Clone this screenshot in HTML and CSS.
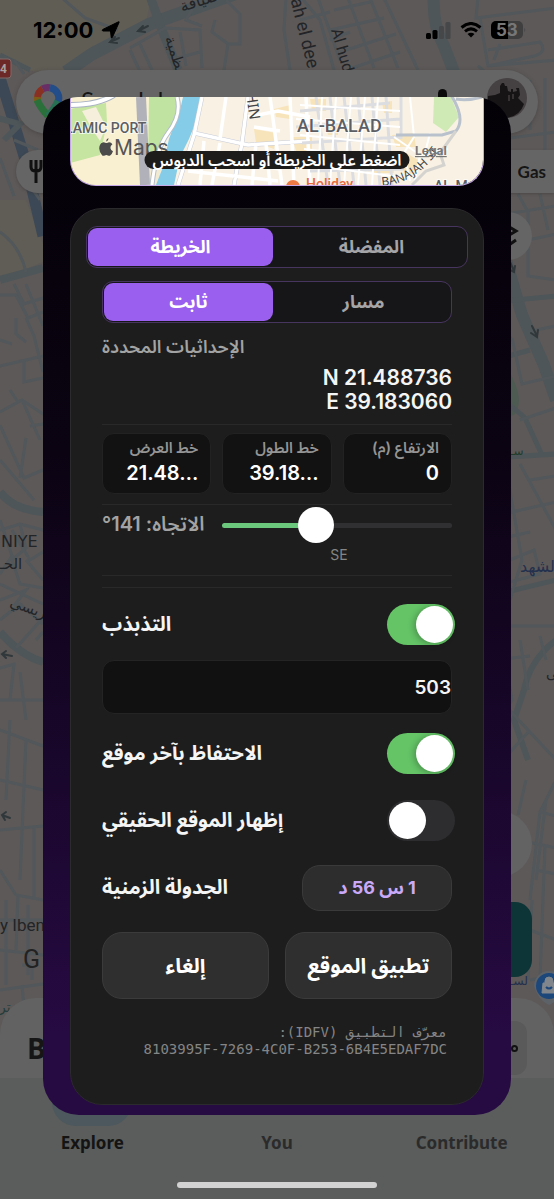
FILE: index.html
```html
<!DOCTYPE html>
<html lang="ar">
<head>
<meta charset="utf-8">
<meta name="viewport" content="width=device-width, initial-scale=1">
<title>الخريطة</title>
<link rel="stylesheet" href="styles.css">
</head>
<body>
<div class="screen">
  <div class="backdrop">
    <svg class="base-map" viewBox="0 0 554 1199" preserveAspectRatio="xMidYMin slice" aria-hidden="true">
      <rect width="554" height="1199" fill="#5d5958"/>
      <path d="M0 0H150L146 24L92 58L60 74L22 70L0 56Z" fill="#605d55"/>
      <path d="M0 200H26L43 244V262L0 280Z" fill="#5f5d55"/>
      <path d="M494 350Q530 395 514 415L494 420Z" fill="#4d5b52"/>
      <g fill="none" stroke="#4e5659" stroke-linejoin="round">
        <path d="M66 72L92 54L150 24L240 -8" stroke-width="13"/>
        <path d="M150 -4L162 30L178 70" stroke-width="9"/>
        <path d="M434 -4Q432 24 444 46L454 72" stroke-width="12"/>
        <path d="M500 240L522 315L544 365L556 400" stroke-width="12"/>
        <path d="M494 302L556 296M494 360L530 350M494 395Q515 408 525 418L542 455M494 458L556 454M494 595L556 580" stroke-width="5"/>
        <path d="M0 280L43 268M0 492Q14 510 43 512M0 632Q20 655 43 662" stroke-width="8"/>
        <path d="M556 640Q530 660 524 690L514 720L528 760" stroke-width="6"/>
        <path d="M0 55L30 70" stroke-width="5"/>
      </g>
      <g fill="none" stroke="#3c4855">
        <path d="M0 78L10 110L24 156L43 236" stroke-width="11"/>
        <path d="M-2 118L20 124L4 140" stroke="#4e5659" stroke-width="6"/>
      </g>
      <g fill="none" stroke="#51575a" stroke-width="3">
        <path d="M62 -2L85 18L118 30M130 50L142 76M130 48L165 28L200 30L202 68M140 44L152 70M180 32L186 66M200 -4L186 20L202 26M215 20L212 32L228 44H240V14L226 0M228 44L224 70M170 60L200 52"/>
        <path d="M286 -2L284 30L290 70M300 -4L320 20L334 70M318 -2L340 60M334 10L370 2M330 30L384 18M340 52L396 34M348 -2L374 68M370 -2L398 68M384 -2L418 70M300 20L330 12M352 68L400 52M330 40L350 32"/>
        <path d="M478 -2L476 18L556 8M480 18L488 66L556 60M488 50L540 42Q548 52 534 56L488 66M500 44L494 60M530 80V130M545 78V150M494 140L556 132M478 66L492 78"/>
        <path d="M14 60L24 74M0 158L14 196M26 180L40 200M14 140L38 150"/>
        <path d="M0 232Q20 246 26 272M0 295H16L28 318L43 312M14 284L24 304L43 298M26 284L43 326M16 318V334L26 342M0 340L12 344M26 318L34 336L43 372M0 366L43 356M0 412L22 400L43 414M24 360V382L43 378M10 390L18 402M0 425L24 478L43 470M22 400L40 440M30 426L43 424M26 438L20 478M0 460L12 474L34 500"/>
        <path d="M0 530L20 524L43 530M0 520L12 556L0 574M12 530L30 560L43 552M20 524L26 548L12 560L20 584L43 588M0 584L43 604M0 600L26 590L14 606M26 560L43 580M0 620L20 604L43 624M16 648L43 618M0 668L14 664L10 700M20 672L26 720M36 640L43 632M0 700H43"/>
        <path d="M494 216L556 206M518 194L528 212V276L556 280M540 194L548 230M528 240L556 234M494 340L512 338M536 330L556 326M512 338L522 384L556 376M520 420L556 408M506 468L522 560L510 600M520 464L556 530M494 516L556 502M494 540L530 532M510 560L534 550L540 574L510 582M530 480L556 476M494 626H556M502 640L512 700L494 730M520 640L528 690M540 636L546 660M494 660L530 656M500 700L556 760M530 730L494 770"/>
        <path d="M526 780L518 815M556 780L540 812L530 900M540 812L556 816M528 842L556 848M536 870L556 874M530 930L556 940M532 900L528 980M546 800L536 880M545 846L540 980M530 980L556 975"/>
        <path d="M0 730L43 746M10 720L6 800M0 780L43 790M26 740L20 880M0 830L43 826M0 870L16 895L43 900M18 895L16 950M0 920H43M6 900V985M28 905V975M0 950L43 955M0 990L43 984M22 965H32V980M22 985L24 1006M34 826V900"/>
      </g>
      <g fill="none" stroke="#31383b" stroke-width="2" stroke-linecap="round">
        <path d="M148 26L138 31M143 26L138 31L145 32M119 38L110 42M115 37L110 42L117 43"/>
        <path d="M532 326L537 336M531 333L537 337L538 330M510 262L514 271M508 269L514 272L515 266M12 656L2 654M6 651L2 654L6 658"/>
        <path d="M10 818L2 815M6 812L2 815L5 820"/>
      </g>
      <g class="map-names">
        <text x="182" y="12" transform="rotate(-18 182 12)" font-size="16">ضيافة</text>
        <text x="165" y="38" transform="rotate(72 165 38)" font-size="15">عظمية</text>
        <text x="288" y="-10" transform="rotate(76 288 -10)" font-size="18">nah el dee</text>
        <text x="331" y="30" transform="rotate(74 331 30)" font-size="16">Al hud</text>
        <text x="1" y="547" font-size="16" class="district">NIYE</text>
        <text x="-5" y="569" font-size="15">الحــ</text>
        <text x="9" y="606" transform="rotate(20 9 606)" font-size="15">ريسي</text>
        <text x="0" y="931" font-size="17">y Iben</text>
        <text x="-1" y="1012" font-size="14" fill="#263c3a">تر</text>
        <text x="546" y="678" font-size="14">ئى</text>
        <text x="520" y="572" font-size="16" fill="#23304e">لشهد</text>
        <text x="510" y="455" font-size="12" fill="#223c2c">سـ</text>
        <text x="510" y="985" font-size="12" fill="#23304e">لسـ</text>
        <text x="23" y="968" font-size="25" fill="#222">G</text>
      </g>
      <rect x="-10" y="59" width="21" height="19" rx="3" fill="#6b2826" stroke="#7f6a69"/>
      <text x="0" y="73" class="shield">4</text>
      <circle cx="499" cy="844" r="33" fill="#636363"/>
      <circle cx="508" cy="236" r="24" fill="#656565"/>
      <path d="M506 225L516 231L506 237M506 247L516 240" fill="none" stroke="#111" stroke-width="3"/>
      <rect x="470" y="902" width="62" height="75" rx="17" fill="#0d3537"/>
      <path d="M534 986A15 15 0 1 1 564 986Q560 1000 549 1005Q538 1000 534 986Z" fill="#5d6268"/>
      <circle cx="549" cy="986" r="13" fill="#1c477a"/>
      <path d="M543 983H555L556 993H542ZM545 983V981A4 4 0 0 1 553 981V983" fill="#80868c" stroke="#80868c"/>
      <path d="M546 987Q549 990 552 987" fill="none" stroke="#1c477a" stroke-width="2"/>
    </svg>

    <div class="app">
      <div class="status">
        <span class="clock">12:00
          <svg width="19" height="18" viewBox="0 0 19 18"><path d="M17.500.8Q18.500.4 18 1.600L11.300 16.600Q10.500 17.700 10.200 16.200L9.500 10H2Q.5 9.600 1.700 8.500Z" fill="#000" stroke="#000"/></svg>
        </span>
        <span class="signals">
          <svg width="25" height="17" viewBox="0 0 25 17"><rect x="0" y="11" width="5" height="6" rx="1.500" fill="#000"/><rect x="6.500" y="8" width="5" height="9" rx="1.500" fill="#000"/><rect x="13" y="4" width="5" height="13" rx="1.500" fill="#454748"/><rect x="19.500" y="0" width="5" height="17" rx="1.500" fill="#454748"/></svg>
          <svg width="22" height="16" viewBox="0 0 22 16"><path d="M1.500 5.500Q11-2.500 20.500 5.500M5 9.300Q11 4.500 17 9.300" fill="none" stroke="#000" stroke-width="3"/><path d="M7.500 12Q11 9.500 14.500 12L11 15.600Z" fill="#000"/></svg>
          <svg width="35" height="18" viewBox="0 0 35 18"><rect width="32" height="18" rx="5" fill="#3f3f40"/><path d="M5 0H17V18H5A5 5 0 0 1 0 13V5A5 5 0 0 1 5 0Z" fill="#000"/><path d="M33.500 6.500Q35 9 33.500 11.500Z" fill="#3f3f40"/><text x="5" y="15" class="battery-num">53</text></svg>
        </span>
      </div>
      <div class="search">
        <svg width="30" height="40" viewBox="0 0 30 40"><g fill="none" stroke-width="7"><path d="M4.500 15A10.500 10.500 0 0 1 9.700 5.900" stroke="#8a3022"/><path d="M9.700 5.900A10.500 10.500 0 0 1 17 4.700" stroke="#672f66"/><path d="M17 4.700A10.500 10.500 0 0 1 25 19" stroke="#234d88"/><path d="M5 18.500A10.500 10.500 0 0 1 4.500 14" stroke="#7e5c18"/><path d="M4 17Q7 24 15 33" stroke="#29703a"/><path d="M25 18Q22 25 15 33" stroke="#277054"/></g></svg>
        <span class="search-text">Search here</span>
        <svg width="14" height="26" viewBox="0 0 14 26"><rect x="3" y="0" width="9" height="16" rx="4.500" fill="#0b0b0b"/><path d="M1 11Q1 19 7.500 19T14 11M7.500 19V25" fill="none" stroke="#0b0b0b" stroke-width="2"/></svg>
        <svg width="40" height="40" viewBox="0 0 40 40"><circle cx="20" cy="20" r="20" fill="#454041"/><path d="M1 18L8 17L13 15L13 8L15 5H17L18 8H20L21 13L24 14V11H26V14L30 13L29 10H32L33 17L31 20L37 26Q33 38 20 40Q6 37 1 24Z" fill="#171416"/><path d="M26 16V21M22 17V23" stroke="#575052"/></svg>
      </div>
      <div class="chips">
        <button class="chip" aria-label="Restaurants"><svg width="14" height="24" viewBox="0 0 14 24"><path d="M2 0V7Q2 11 7 11T12 7V0M7 0V23" fill="none" stroke="#111" stroke-width="3"/></svg></button>
        <button class="chip chip-end">Gas</button>
      </div>
      <div class="sheet"><b>B</b><span class="more"><i></i></span></div>
      <nav class="tabs">
        <a href="#" class="tab tab-on"><i class="pill"></i>Explore</a>
        <a href="#" class="tab"><i class="pill"></i>You</a>
        <a href="#" class="tab"><i class="pill"></i>Contribute</a>
      </nav>
      <div class="home"><div class="home-bar"></div></div>
    </div>
  </div>

  <main class="dialog">
    <section class="preview">
      <svg viewBox="0 0 414 88" preserveAspectRatio="xMidYMid slice" aria-hidden="true">
        <rect width="414" height="88" fill="#f9f2e4"/>
        <path d="M0 0H84V88H0Z" fill="#f9f0d2"/>
        <path d="M0 12L36 6L37 26L30 58L0 66Z" fill="#c5e5a0"/>
        <path d="M12 14L26 10L36 30L30 44L22 32Z" fill="#f5efdc"/>
        <path d="M79 0H108Q106 30 88 56L78 70Z" fill="#c0e3a1"/>
        <path d="M78 60L96 50L88 88H76Z" fill="#f2ead0"/>
        <path d="M113 0H130Q128 22 119 42L110 60L104 88H86L96 62Q96 42 108 22Z" fill="#84cce8"/>
        <path d="M0 8Q28 8 44-2" fill="none" stroke="#a8b2c2" stroke-width="6"/><path d="M0 8Q28 8 44-2" fill="none" stroke="#fff" stroke-width="4"/>
        <path d="M71 0L75 88" stroke="#b0b1b9" stroke-width="10"/>
        <path d="M107 0Q112 18 98 36Q86 52 82 88" fill="none" stroke="#b5bdca" stroke-width="5"/><path d="M107 0Q112 18 98 36Q86 52 82 88" fill="none" stroke="#fff" stroke-width="3"/>
        <g fill="#f8e4bb"><path d="M184 32L206 36L204 52L186 46ZM204 12L220 8V22L206 20ZM222 40H242V54H226ZM240 2H256V14H242ZM322 38L344 36L346 50H326ZM300 62L322 58L324 76H304ZM336 56L350 64L340 78L330 70ZM256 30L268 26V38H258ZM312 6L322 4V16H314Z"/></g>
        <g fill="none" stroke="#c6cbd7" stroke-width="4.500"><path d="M132 0L124 38L108 88M124 36L178 48L240 44M178 0L172 46L164 88"/></g>
        <g fill="none" stroke="#fff" stroke-width="3.500">
          <path d="M132 0L124 38L108 88M124 36L178 48L240 44M156 0L150 42M178 0L172 46L164 88M178 20L208 14L240 20M200 0L212 88M122 56L150 62L210 72M118 74L208 84M134 44L130 88M150 46L142 88M186 46L182 88M196 46L200 88M184 30L210 34M220 0L224 88M236 0L240 88"/>
        </g>
        <g fill="none" stroke="#dcdde0" stroke-width="3"><path d="M230 14L320 6M226 30L330 22M232 46L330 40M236 60L330 56M240 74L334 72M246 0L258 88M260 0L270 88M274 0L284 88M288 0L296 88M302 0L310 88M316 0L322 88M331 0V42"/></g>
        <g fill="none" stroke="#fff" stroke-width="2"><path d="M230 8L330 14M226 22L330 30M230 38L330 48M234 52L330 64M236 68L330 80M252 0L248 88M266 0L260 88M281 0L274 88M295 0L288 88M308 0L302 88M340 0L344 40L334 56L340 84M324 40L350 58L378 52M350 58L344 88M360 36L354 60"/></g>
        <path d="M364 0H381L389 20L376 35L363 26Z" fill="#cfeab4"/>
        <path d="M381-2Q396 22 386 34L372 38H326M386 2Q398 4 412 0" fill="none" stroke="#b8c1cc" stroke-width="3"/>
        <path d="M386 34L370 56L374 68L356 74L342 88" fill="none" stroke="#d5d3cf" stroke-width="3"/>
        <circle cx="223" cy="90" r="7" fill="#ed7a42"/>
        <text x="-5" y="36" class="place">LAMIC PORT</text>
        <text x="227" y="35" class="place place-big">AL-BALAD</text>
        <text x="236" y="92" class="poi">Holiday</text>
        <text x="364" y="94" class="place">AL-M</text>
        <path id="street" d="M312 89Q350 86 374 46" fill="none"/>
        <text class="street"><textPath href="#street">BANAJAH ST</textPath></text>
        <text x="176" y="-4" transform="rotate(82 176 -4)" class="street hin">HIN</text>
        <g transform="translate(28 41)" fill="#4b4b4b"><path d="M11 3.600Q11.200 1 13.400 0Q13.600 2.800 11 3.600Z" transform="translate(-3 0)"/><path d="M8 5Q9 5 10.200 4.400Q13 3.900 14.400 6.200Q12.200 7.600 12.400 10Q12.700 12.400 15 13.300Q14 16.500 11.900 17.700Q11 18 9.900 17.400Q8.400 16.700 6.800 17.400Q5.400 18.200 4.200 17.400Q1.500 15 1.200 10.600Q1.200 5.600 4.700 4.400Q6 4.100 8 5Z"/></g>
        <text x="44" y="58" class="maps">Maps</text>
        <text x="345" y="58" class="legal">Legal</text>
      </svg>
      <p class="hint" dir="rtl">اضغط على الخريطة أو اسحب الدبوس</p>
    </section>

    <form class="panel">
      <div class="segment segment-wide">
        <button type="button" class="seg seg-on">الخريطة</button>
        <button type="button" class="seg">المفضلة</button>
      </div>
      <div class="segment">
        <button type="button" class="seg seg-on">ثابت</button>
        <button type="button" class="seg">مسار</button>
      </div>
      <h2 class="caption">الإحداثيات المحددة</h2>
      <p class="coords">N 21.488736<br>E 39.183060</p>
      <hr>
      <div class="fields">
        <label class="field"><span>خط العرض</span><input value="21.48…"></label>
        <label class="field"><span>خط الطول</span><input value="39.18…"></label>
        <label class="field"><span dir="rtl">الارتفاع (م)</span><input value="0"></label>
      </div>
      <hr>
      <div class="heading">
        <label for="heading" dir="rtl">الاتجاه: 141°</label>
        <input id="heading" class="slider" type="range" min="0" max="360" value="141">
      </div>
      <output class="compass" for="heading">SE</output>
      <hr>
      <hr class="second">
      <div class="row row-first"><label for="jitter">التذبذب</label><input id="jitter" class="toggle" type="checkbox" checked></div>
      <input class="amount" value="503" aria-label="التذبذب">
      <div class="row"><label for="keep">الاحتفاظ بآخر موقع</label><input id="keep" class="toggle" type="checkbox" checked></div>
      <div class="row"><label for="real">إظهار الموقع الحقيقي</label><input id="real" class="toggle" type="checkbox"></div>
      <div class="row row-timer"><label for="timer">الجدولة الزمنية</label><button id="timer" type="button" class="timer" dir="rtl">1 س 56 د</button></div>
      <div class="actions">
        <button type="button" class="action">إلغاء</button>
        <button type="button" class="action">تطبيق الموقع</button>
      </div>
      <p class="device" dir="rtl">معرّف التطبيق (IDFV):<br><bdi>8103995F-7269-4C0F-B253-6B4E5EDAF7DC</bdi></p>
    </form>
  </main>
</div>
</body>
</html>
```
FILE: styles.css
```css
* { box-sizing: border-box; }
body {
  margin: 0;
  background: #5d5958;
  color: #f5f5f5;
  font-family: Inter, "Noto Sans Arabic", "DejaVu Sans", sans-serif;
}
button, input { font: inherit; color: inherit; border: 0; margin: 0; padding: 0; }
p, h2 { margin: 0; }
svg { display: block; flex: none; }

.screen { position: relative; min-height: 100vh; padding: 97px 43px 84px; overflow: hidden; }
.backdrop { position: absolute; inset: 0; }
.base-map { position: absolute; inset: 0; width: 100%; height: 100%; }
.map-names { fill: #222427; font-family: Roboto, "DejaVu Sans", sans-serif; }
.district { font-family: "DejaVu Sans", sans-serif; }
.shield { fill: #a8a0a0; font: bold 12px Roboto, sans-serif; }
.app { position: relative; height: 100%; display: flex; flex-direction: column; }

.status { display: flex; justify-content: space-between; align-items: center; height: 60px; padding: 0 28px 0 33px; }
.clock { display: flex; align-items: center; gap: 8px; color: #000; font-size: 22px; font-weight: 700; }
.signals { display: flex; align-items: center; gap: 9px; }
.battery-num { fill: #777; font: 700 17px Inter, sans-serif; }

.search {
  display: flex; align-items: center; gap: 16px;
  height: 64px; margin: 10px 16px 0; padding: 0 11px 8px 17px;
  border-radius: 32px; background: #656565; box-shadow: 0 1px 4px #3337;
}
.search-text { flex: 1; padding: 2px 0 0 2px; color: #161616; font: 24px Lato, sans-serif; }
.search svg:first-child { margin-top: 10px; }
.search svg:nth-of-type(2) { margin: 7px 22px 0 0; }

.chips { display: flex; justify-content: space-between; margin-top: 16px; padding-left: 16px; }
.chip {
  display: flex; align-items: center; height: 43px; width: 130px; padding: 0 13px;
  border-radius: 22px; background: #656565; color: #161616;
  box-shadow: 0 1px 3px #3337; font: 700 17px Lato, "Noto Sans", sans-serif;
}
.chip-end { width: 90px; justify-content: flex-end; padding: 0 8px; border-radius: 22px 0 0 22px; }

.sheet {
  display: flex; justify-content: space-between; align-items: center;
  height: 80px; margin-top: auto; padding: 20px 27px 0; border-radius: 36px 36px 0 0;
  background: #626262; color: #161616; font: 28px "Open Sans", sans-serif;
}
.more { display: flex; align-items: center; justify-content: flex-end; width: 60px; height: 54px; padding-right: 9px; border-radius: 12px; background: #5a5a5a; }
.more i { width: 7px; height: 7px; border: 2px solid #111; border-radius: 50%; }
.tabs { display: grid; grid-template-columns: repeat(3, minmax(0, 1fr)); background: #5a5d5c; }
.tab {
  display: flex; flex-direction: column; align-items: center; gap: 5px;
  color: #2b2b2b; font: 700 17px/24px "Noto Sans", sans-serif; text-decoration: none;
}
.tab-on { color: #141414; }
.pill { width: 80px; height: 48px; border-radius: 24px; }
.tab-on .pill { background: #4c585d; }
.home { padding: 27px 0 11px; background: #5a5d5c; }
.home-bar { width: 36%; height: 6px; margin: 0 auto; border-radius: 3px; background: #d2d2d2; }

.dialog {
  position: relative; padding: 0 27px 10px; border-radius: 36px; overflow: hidden;
  background: linear-gradient(#030106, #0b0312 35%, #260a42 92%);
}
.preview { position: relative; height: 89px; overflow: hidden; border: 1px solid #c5a8e8; border-top: 0; border-radius: 0 0 26px 26px; }
.preview svg { width: 100%; height: 100%; }
.place { fill: #5c5e64; font: 500 14px Roboto, sans-serif; stroke: #fffa; stroke-width: 2px; paint-order: stroke; }
.place-big { font-size: 18px; }
.poi { fill: #e86a3e; font: 500 14px Roboto, sans-serif; }
.street { fill: #444; font: 12px "Noto Sans", sans-serif; }
.hin { font-size: 15px; }
.maps { fill: #555; font: 21px Inter, sans-serif; }
.legal { fill: #777; font: 700 12px Inter, sans-serif; text-decoration: underline; }
.hint {
  position: absolute; left: 50%; top: 54px; transform: translateX(-50%);
  padding: 0 8px; border-radius: 9px; background: #1d1c1a; color: #fff;
  font-size: 16px; font-weight: 600; line-height: 18px; white-space: nowrap;
}

.panel {
  margin-top: 22px; padding: 17px 31px 46px; border: 1px solid #2b2a2c;
  border-radius: 32px; background: #1d1d1d;
}
.segment { display: grid; grid-template-columns: 1fr 1fr; height: 42px; margin-top: 13px; padding: 1px; border: 1px solid #47355f; border-radius: 11px; background: #161618; }
.segment-wide { margin: 0 -16px; }
.seg { border-radius: 9px; background: none; color: #a5a5a8; font-size: 18px; font-weight: 700; }
.seg-on { margin-right: 4px; background: #9a5fee; color: #fff; }
.caption { margin-top: 11px; color: #a3a3a3; font-size: 18px; font-weight: 600; line-height: 26px; }
.coords { margin-top: 6px; font-size: 21px; font-weight: 600; line-height: 24px; text-align: right; }
hr { height: 1px; margin: 10px 0 0; border: 0; background: #292929; }
.fields { display: grid; grid-template-columns: repeat(3, 1fr); gap: 11px; margin-top: 8px; }
.field { height: 61px; padding: 3px 12px 0; border: 1px solid #222; border-radius: 12px; background: #121212; text-align: right; }
.field span { display: block; color: #959595; font-size: 15px; font-weight: 600; line-height: 22px; }
.field input { display: block; width: 100%; height: 28px; background: none; color: #fff; font-size: 20px; font-weight: 600; text-align: right; }
.heading { display: flex; align-items: center; gap: 18px; height: 40px; color: #a3a3a3; font-size: 20px; font-weight: 600; }
.heading label { white-space: nowrap; }
.slider { flex: 1; min-width: 0; height: 36px; appearance: none; background: none; }
.slider::-webkit-slider-runnable-track { height: 5px; border-radius: 3px; background: linear-gradient(90deg, #6bc77c 41%, #303032 41%); }
.slider::-webkit-slider-thumb { appearance: none; width: 36px; height: 36px; margin-top: -16px; border-radius: 50%; background: #fff; }
.compass { display: block; width: 226px; margin-left: auto; color: #858585; font-size: 14px; line-height: 20px; text-align: center; }
.second { margin-top: 11px; }
.row { display: flex; justify-content: space-between; align-items: center; height: 41px; margin-top: 26px; font-size: 20px; font-weight: 700; }
.row-first { margin-top: 16px; }
.amount { display: block; width: 100%; height: 54px; margin: 15px 0 -7px; border: 1px solid #242424; border-radius: 12px; background: #111; font-size: 19px; font-weight: 600; text-align: right; }
.toggle { appearance: none; flex: none; width: 68px; height: 41px; margin-right: -3px; padding: 2px; border-radius: 21px; background: #2d2d30; }
.toggle::before { content: ""; display: block; width: 37px; height: 37px; border-radius: 50%; background: #fff; }
.toggle:checked { background: #64c466; }
.toggle:checked::before { margin-left: auto; box-shadow: -2px 1px 6px #0004; }
.row-timer { height: 46px; margin-top: 24px; }
.timer { width: 150px; height: 46px; border: 1px solid #3a3a3a; border-radius: 18px; background: #2d2d2e; color: #c9a9f8; font-size: 18px; font-weight: 700; }
.actions { display: grid; grid-template-columns: 1fr 1fr; gap: 16px; margin-top: 21px; }
.action { height: 67px; border: 1px solid #3b3b3b; border-radius: 20px; background: #2f2f2f; color: #fff; font-size: 21px; font-weight: 700; }
.device { margin-top: 25px; padding-right: 5px; color: #858585; font: 14px/17px "DejaVu Sans Mono", monospace; }
```
